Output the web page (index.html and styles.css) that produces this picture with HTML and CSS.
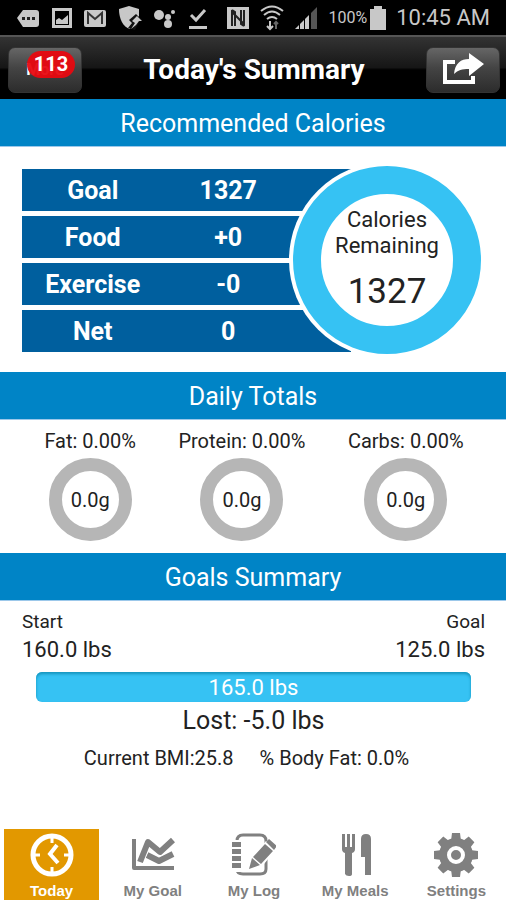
FILE: index.html
```
<!DOCTYPE html>
<html lang="en">

<head>
    <meta charset="UTF-8">
    <meta name="viewport" content="width=device-width, initial-scale=1.0">
    <title>Today's Summary</title>

    <link rel="stylesheet" href="styles.css">
</head>

<body>

    <div class="status-bar">
        <div class="notifications">
            <svg width="24" height="20" viewBox="0 0 24 20"><path d="M7 2h13a3 3 0 0 1 3 3v11a3 3 0 0 1-3 3H7L1 10z" fill="#c8c8c8"/><path d="M6 9h3v3H6zM11 9h3v3h-3zM16 9h3v3h-3z" fill="#222"/></svg>
            <svg width="20" height="20" viewBox="0 0 20 20"><path d="M1.500 1.500h17v17h-17z" fill="none" stroke="#c8c8c8" stroke-width="3"/><path d="M4 16v-4l3-2 3 2 6-5v9z" fill="#c8c8c8"/></svg>
            <svg width="22" height="20" viewBox="0 0 22 20"><rect y="2" width="22" height="17" rx="2" fill="#c8c8c8"/><path d="M4 16V5l7 6 7-6v11" fill="none" stroke="#333" stroke-width="2"/></svg>
            <svg width="24" height="24" viewBox="0 0 24 24"><path d="M1 3l10-3 10 3v7l-9 13C5 21 1 13 1 3z" fill="#c8c8c8"/><path d="M10 22l4-5-3-3 7-6 6 6-3 2-4 8z" fill="#111"/><path d="M13 23l4-6-3-2 5-5 5 5h-3l-3 4z" fill="#c8c8c8"/></svg>
            <svg width="22" height="20" viewBox="0 0 22 20" fill="#c8c8c8"><circle cx="5" cy="7" r="5"/><circle cx="14" cy="9" r="3"/><circle cx="19" cy="4" r="2"/><circle cx="14" cy="16" r="4"/></svg>
            <svg width="20" height="24" viewBox="0 0 20 24"><path d="M3 9l5 5L17 4" fill="none" stroke="#c8c8c8" stroke-width="3"/><path d="M1 20h18v3H1z" fill="#c8c8c8"/></svg>
        </div>
        <div class="system">
            <svg width="24" height="22" viewBox="0 0 24 22"><path d="M1 0h22v22H1z" fill="#c8c8c8"/><path d="M6 19V5l12 12V3M6 3l3 2v14M18 19l-3-2V3" fill="none" stroke="#222" stroke-width="2"/></svg>
            <svg width="24" height="26" viewBox="0 0 24 26" fill="none" stroke="#c8c8c8" stroke-width="2"><path d="M1 6q11-9 22 0M4 10q8-7 16 0M7 14q5-4 10 0"/><path d="M10 16v8M7 21l3 3 3-3"/><path d="M16 24v-7M14 19l2-2 2 2" stroke="#666"/></svg>
            <svg width="24" height="24" viewBox="0 0 24 24"><path d="M17 7l6-6v22h-6z" fill="#555"/><path d="M1 23l4-4v4zM6 18l4-4v9H6zM11 13l4-4v14h-4z" fill="#c8c8c8"/></svg>
            <span class="battery-level">100%</span>
            <svg width="16" height="24" viewBox="0 0 16 24"><path d="M4 0h8v3h4v21H0V3h4z" fill="#c8c8c8"/></svg>
            <span class="clock">10:45 AM</span>
        </div>
    </div>

    <header class="header">
        <button class="header-btn" type="button">
            More
            <span class="badge">113</span>
        </button>
        <h1>Today's Summary</h1>
        <button class="header-btn" type="button" aria-label="Share">
            <svg width="42" height="34" viewBox="0 0 42 34"><path d="M13 9H3v20h28v-6" fill="none" stroke="#fff" stroke-width="4"/><path d="M12 21C13 10 19 6 27 6V0l15 11-15 12v-7c-7 0-11 1-15 5z" fill="#fff"/></svg>
        </button>
    </header>

    <main>
        <h2>Recommended Calories</h2>
        <section class="calories">
            <table>
                <tr><th scope="row">Goal</th><td>1327</td></tr>
                <tr><th scope="row">Food</th><td>+0</td></tr>
                <tr><th scope="row">Exercise</th><td>-0</td></tr>
                <tr><th scope="row">Net</th><td>0</td></tr>
            </table>
            <div class="remaining">
                <span>Calories<br>Remaining</span>
                <strong>1327</strong>
            </div>
        </section>

        <h2>Daily Totals</h2>
        <section class="totals">
            <div class="total">
                Fat: 0.00%
                <div class="ring">0.0g</div>
            </div>
            <div class="total">
                Protein: 0.00%
                <div class="ring">0.0g</div>
            </div>
            <div class="total">
                Carbs: 0.00%
                <div class="ring">0.0g</div>
            </div>
        </section>

        <h2>Goals Summary</h2>
        <section class="goals">
            <div class="range">
                <div>Start<span class="weight">160.0 lbs</span></div>
                <div class="target">Goal<span class="weight">125.0 lbs</span></div>
            </div>
            <div class="progress">165.0 lbs</div>
            <p class="lost">Lost: -5.0 lbs</p>
            <div class="stats">
                <span>Current BMI:25.8</span>
                <span>% Body Fat: 0.0%</span>
            </div>
        </section>
    </main>

    <nav class="tabs">
        <a class="tab active" href="#today">
            <svg width="44" height="44" viewBox="0 0 44 44" fill="none" stroke="#fff"><circle cx="22" cy="22" r="19" stroke-width="5"/><path d="M27 12l-7 9 8 9" stroke-width="4"/><path d="M22 5v5M22 34v5M5 22h5M34 22h5" stroke-width="3"/></svg>
            Today
        </a>
        <a class="tab" href="#goal">
            <svg width="44" height="44" viewBox="0 0 44 44" fill="none" stroke="#808080" stroke-linejoin="round"><path d="M3 6v29h40" stroke-width="4"/><path d="M16 22l12 6 14-7" stroke-width="6"/><path d="M9 28l8-19 12 10L42 7" stroke="#fff" stroke-width="8"/><path d="M9 29l8-20 12 10L42 7" stroke-width="6"/></svg>
            My Goal
        </a>
        <a class="tab" href="#log">
            <svg width="44" height="44" viewBox="0 0 44 44"><path d="M5 36V8q0-6 6-6h17q6 0 6 6v28q0 5-6 5H11q-6 0-6-5" fill="none" stroke="#808080" stroke-width="3"/><path d="M2 7h6v32H2zM20 24l14-16 12 6-14 17-16 7z" fill="#fff"/><path d="M0 9h9v5H0zM0 16h9v5H0zM0 23h9v5H0zM0 30h9v5H0zM17 36l3-11 8 7zM21 24l12-13 8 7-12 13zM34 9l3-3 8 7-3 4z" fill="#808080"/></svg>
            My Log
        </a>
        <a class="tab" href="#meals">
            <svg width="44" height="44" viewBox="0 0 44 44" fill="#808080"><path d="M9 1h3v13h2V1h3v13h2V1h3v15q0 3-3 4v21q0 2-3 2t-4-2V20q-3-1-3-4zM28 6q0-5 5-5t5 5v36h-6V24h-4z"/></svg>
            My Meals
        </a>
        <a class="tab" href="#settings">
            <svg width="44" height="44" viewBox="0 0 44 44"><g fill="#808080"><circle cx="22" cy="22" r="17"/><path id="tooth" d="M18 0h8l1 8H17zM18 44h8l1-8H17zM0 18v8l8 1V17zM44 18v8l-8 1V17z"/><use href="#tooth" transform="rotate(45 22 22)"/></g><circle cx="22" cy="22" r="7" fill="#808080" stroke="#fff" stroke-width="4"/></svg>
            Settings
        </a>
    </nav>

</body>

</html>
```
FILE: styles.css
```
* {
    box-sizing: border-box;
    padding: 0;
    margin: 0;
}

body {
    min-height: 100vh;
    display: flex;
    flex-direction: column;
    background: #fff;
    color: #222;
    font-family: Roboto, "Liberation Sans", sans-serif;
    font-size: 20px;
}

svg {
    flex: none;
}

.status-bar {
    height: 35px;
    padding: 0 16px;
    display: flex;
    align-items: center;
    justify-content: space-between;
    background: #000;
    color: #c8c8c8;
}

.notifications {
    display: flex;
    align-items: center;
    gap: 12px;
}

.system {
    display: flex;
    align-items: center;
    gap: 10px;
}

.battery-level {
    font-size: 16px;
    margin-right: -7px;
}

.clock {
    font-size: 22px;
}

.header {
    height: 64px;
    padding: 4px 6px 0 8px;
    display: flex;
    align-items: center;
    justify-content: space-between;
    background: linear-gradient(#333, #161616 50%, #000 54%);
    border-top: 2px solid #555;
    border-bottom: 1px solid #000;
}

h1 {
    color: #fff;
    font-size: 28px;
    font-weight: bold;
}

.header-btn {
    position: relative;
    width: 74px;
    height: 46px;
    display: flex;
    align-items: center;
    justify-content: center;
    border: 1px solid #333;
    border-radius: 7px;
    background: linear-gradient(#666, #444 45%, #2c2c2c);
    color: #fff;
    font-family: inherit;
    font-size: 16px;
    font-weight: bold;
}

.badge {
    position: absolute;
    top: 3px;
    right: 6px;
    width: 48px;
    border-radius: 14px;
    background: rgba(232, 8, 16, 0.95);
    font-size: 20px;
    line-height: 27px;
    text-align: center;
}

h2 {
    padding-top: 3px;
    border-bottom: 1px solid #9cc8ea;
    background: #0084c6;
    color: #fff;
    font-size: 25px;
    font-weight: normal;
    line-height: 44px;
    text-align: center;
}

.calories {
    display: flex;
    align-items: center;
    padding: 19px 25px 18px 22px;
}

.calories table {
    flex: 1;
    table-layout: fixed;
    border-spacing: 0;
    color: #fff;
    font-size: 25px;
    font-weight: bold;
    text-align: center;
}

.calories th,
.calories td {
    height: 47px;
    border-top: 3px solid #fff;
    border-bottom: 2px solid #fff;
    background: #005f9e;
}

.calories th {
    width: 43%;
}

.calories td {
    padding-right: 58px;
}

.remaining {
    width: 188px;
    height: 188px;
    margin-left: -58px;
    display: flex;
    flex-direction: column;
    align-items: center;
    justify-content: center;
    gap: 12px;
    border: 28px solid #36c2f3;
    border-radius: 50%;
    background: #fff;
    box-shadow: 0 0 0 4px #fff;
    font-size: 22px;
    line-height: 26px;
    text-align: center;
}

.remaining strong {
    font-size: 35px;
    font-weight: normal;
    line-height: 42px;
}

.totals {
    display: flex;
    justify-content: space-evenly;
    padding: 8px 0 12px 2px;
}

.total {
    display: flex;
    flex-direction: column;
    align-items: center;
    gap: 4px;
    line-height: 26px;
}

.ring {
    width: 83px;
    height: 83px;
    display: flex;
    align-items: center;
    justify-content: center;
    border: 13px solid #b6b6b6;
    border-radius: 50%;
}

.goals {
    padding: 8px 21px 8px 22px;
    text-align: center;
}

.range {
    display: flex;
    justify-content: space-between;
    font-size: 19px;
    line-height: 26px;
    text-align: left;
}

.range .target {
    text-align: right;
}

.weight {
    display: block;
    font-size: 22px;
    line-height: 30px;
}

.progress {
    margin: 7px 14px 0;
    padding-top: 2px;
    border-radius: 6px;
    background: #36c2f3;
    box-shadow: inset 0 2px 3px #1594bc;
    color: #fff;
    font-size: 22px;
    line-height: 28px;
}

.lost {
    font-size: 25px;
    line-height: 38px;
}

.stats {
    display: flex;
    justify-content: center;
    gap: 26px;
    padding-right: 14px;
    line-height: 36px;
}

.tabs {
    margin-top: auto;
    padding: 0 2px 0 4px;
    display: grid;
    grid-template-columns: repeat(5, 1fr);
    gap: 6px;
}

.tab {
    height: 71px;
    padding-top: 4px;
    display: flex;
    flex-direction: column;
    align-items: center;
    gap: 6px;
    color: #808080;
    font-family: "Liberation Sans", sans-serif;
    font-size: 15px;
    font-weight: bold;
    line-height: 16px;
    text-decoration: none;
}

.tab.active {
    background: #e29800;
    color: #fff;
}
```
